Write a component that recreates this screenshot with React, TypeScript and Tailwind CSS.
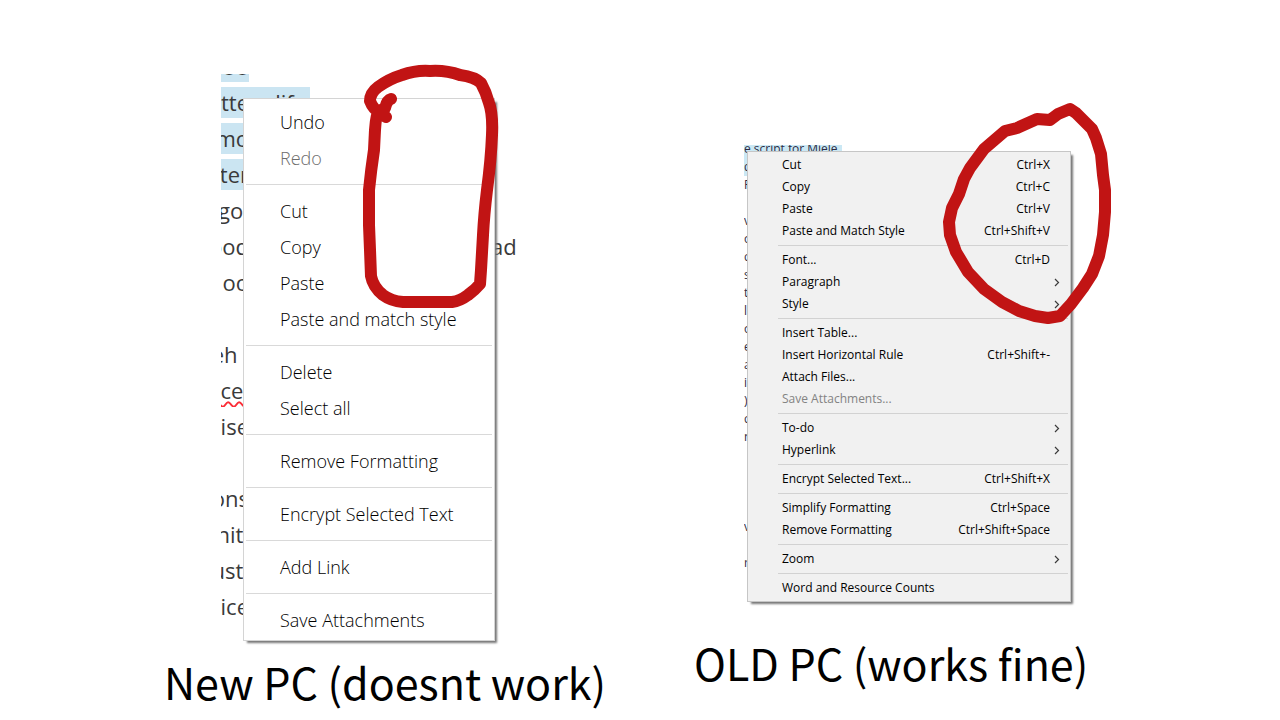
import type { ReactNode } from 'react'
import { clsx } from 'clsx'

interface MenuEntry {
  label: string
  shortcut?: string
  submenu?: boolean
  disabled?: boolean
}

interface DocumentLine {
  text: string
  rest?: string
  after?: string
  selected?: boolean
  misspelled?: boolean
}

const NEW_PC_MENU: MenuEntry[][] = [
  [{ label: 'Undo' }, { label: 'Redo', disabled: true }],
  [{ label: 'Cut' }, { label: 'Copy' }, { label: 'Paste' }, { label: 'Paste and match style' }],
  [{ label: 'Delete' }, { label: 'Select all' }],
  [{ label: 'Remove Formatting' }],
  [{ label: 'Encrypt Selected Text' }],
  [{ label: 'Add Link' }],
  [{ label: 'Save Attachments' }],
]

const OLD_PC_MENU: MenuEntry[][] = [
  [
    { label: 'Cut', shortcut: 'Ctrl+X' },
    { label: 'Copy', shortcut: 'Ctrl+C' },
    { label: 'Paste', shortcut: 'Ctrl+V' },
    { label: 'Paste and Match Style', shortcut: 'Ctrl+Shift+V' },
  ],
  [
    { label: 'Font...', shortcut: 'Ctrl+D' },
    { label: 'Paragraph', submenu: true },
    { label: 'Style', submenu: true },
  ],
  [
    { label: 'Insert Table...' },
    { label: 'Insert Horizontal Rule', shortcut: 'Ctrl+Shift+-' },
    { label: 'Attach Files...' },
    { label: 'Save Attachments...', disabled: true },
  ],
  [
    { label: 'To-do', submenu: true },
    { label: 'Hyperlink', submenu: true },
  ],
  [{ label: 'Encrypt Selected Text...', shortcut: 'Ctrl+Shift+X' }],
  [
    { label: 'Simplify Formatting', shortcut: 'Ctrl+Space' },
    { label: 'Remove Formatting', shortcut: 'Ctrl+Shift+Space' },
  ],
  [{ label: 'Zoom', submenu: true }],
  [{ label: 'Word and Resource Counts' }],
]

const NEW_PC_LINES: DocumentLine[] = [
  { text: 'oo', selected: true },
  { text: 'tte', rest: 'r   life', selected: true },
  { text: 'mo', selected: true },
  { text: 'ter', selected: true },
  { text: 'go ' },
  { text: 'ood', after: 'ad' },
  { text: 'oo' },
  { text: '' },
  { text: 'eh  ' },
  { text: 'ce ', misspelled: true },
  { text: 'oise' },
  { text: '' },
  { text: 'ons' },
  { text: 'nit ' },
  { text: 'ust ' },
  { text: 'ice' },
]

const OLD_PC_LINES = [
  'e script for Miele', 'd', 'P', '', 'v', 'o', 'c', 's', 'te', 'l', 'o', 'e',
  'a', 'i', ')', 'c', 'n', '', '', '', '', 'v', '', 'r',
]

function Chevron() {
  return (
    <svg className="h-[9px] w-[6px]" viewBox="0 0 6 9" fill="none" stroke="#3c3c3c" strokeWidth="1.2" aria-hidden="true">
      <path d="M1 1 L4.5 4.5 L1 8" />
    </svg>
  )
}

function NewMenu() {
  return (
    <div
      role="menu"
      aria-label="New PC"
      className="relative ml-[79px] w-[252px] border border-[#d4d4d4] bg-white pt-[5px] pb-[2px] shadow-[3px_3px_2px_-1px_#777]"
    >
      {NEW_PC_MENU.map((group, i) => (
        <div key={i}>
          {i > 0 && <hr className="mx-[2px] my-2 border-[#d9d9d9]" />}
          {group.map((item) => (
            <button
              key={item.label}
              type="button"
              role="menuitem"
              disabled={item.disabled}
              className="block h-9 w-full pl-9 text-left text-[18px] leading-9 font-light text-black disabled:text-[#6d6d6d]"
            >
              {item.label}
            </button>
          ))}
        </div>
      ))}
    </div>
  )
}

function OldMenu() {
  return (
    <div
      role="menu"
      aria-label="Old PC"
      className="relative ml-[53px] w-[324px] border border-[#c6c6c6] bg-[#f1f1f1] py-[2px] shadow-[3px_3px_2px_-1px_#777]"
    >
      {OLD_PC_MENU.map((group, i) => (
        <div key={i}>
          {i > 0 && <hr className="my-[3px] mr-[2px] ml-[30px] border-[#d2d2d2]" />}
          {group.map((item) => (
            <button
              key={item.label}
              type="button"
              role="menuitem"
              disabled={item.disabled}
              className={clsx(
                'flex h-[22px] w-full items-center justify-between pl-[34px] text-[12px] leading-[22px] text-black disabled:text-[#838383]',
                item.submenu ? 'pr-[10px]' : 'pr-5',
              )}
            >
              <span>{item.label}</span>
              {item.shortcut && <kbd className="font-['Open_Sans','Noto_Sans',sans-serif]">{item.shortcut}</kbd>}
              {item.submenu && <Chevron />}
            </button>
          ))}
        </div>
      ))}
    </div>
  )
}

function NewDocument() {
  return (
    <div className="absolute top-0 left-[57px] w-[300px] overflow-hidden">
      <div className="-mt-[26px] text-[22px] text-[#3a3a3a]">
        {NEW_PC_LINES.map((line, i) => (
          <div key={i} className="flex h-9 items-center whitespace-pre">
            <div className={clsx('flex h-[31px] items-center', line.selected && 'bg-[#cbe5f2]')}>
              <span className="flex w-7 justify-end overflow-hidden">
                <span
                  className={clsx(
                    line.misspelled && 'underline decoration-red-500 decoration-wavy decoration-2 underline-offset-2',
                  )}
                >
                  {line.text}
                </span>
              </span>
              {line.rest && <span className="w-[61px]">{line.rest}</span>}
            </div>
            {line.after && <span className="ml-[242px]">{line.after}</span>}
          </div>
        ))}
      </div>
    </div>
  )
}

function OldDocument() {
  return (
    <div className="absolute top-0 left-[50px] overflow-hidden">
      <div className="-mt-[5px] text-[12px] leading-[18px] text-[#2c2c44]">
        {OLD_PC_LINES.map((line, i) => (
          <div key={i} className="h-[18px]">
            <span className={clsx('inline-block', i < 2 && 'bg-[#cbe8f4] pr-1')}>{line}</span>
          </div>
        ))}
      </div>
    </div>
  )
}

function Marker({ className, viewBox, children }: { className: string; viewBox: string; children: ReactNode }) {
  return (
    <svg
      className={clsx('pointer-events-none absolute', className)}
      viewBox={viewBox}
      fill="none"
      stroke="#c11414"
      strokeWidth="12"
      strokeLinecap="round"
      strokeLinejoin="round"
      aria-hidden="true"
    >
      {children}
    </svg>
  )
}

function Caption({ children }: { children: ReactNode }) {
  return (
    <figcaption className="text-center font-['Noto_Sans_CJK_SC',sans-serif] text-[43px] leading-[60px] whitespace-nowrap text-black">
      {children}
    </figcaption>
  )
}

export default function App() {
  return (
    <main className="flex min-h-screen items-start gap-[92px] overflow-hidden bg-white pl-[164px] font-['Open_Sans','Noto_Sans',sans-serif]">
      <figure className="flex w-[438px] shrink-0 flex-col gap-2.5 pt-[74px]">
        <div className="relative pt-6">
          <NewDocument />
          <NewMenu />
          <Marker className="-top-3.5 left-[196px] h-[252px] w-[144px]" viewBox="360 60 144 252">
            <path d="M386 117 L380 113 Q373 109 370 101 Q370 93 378 87 Q389 79 402 75 Q416 70 430 71 Q446 70 460 75 Q475 77 481 83 Q486 92 489 103 Q493 114 492 135 Q491 160 487 190 Q484 215 483 235 L481 270 L480 284 Q475 290 468 295 Q460 301 452 302 L403 302 Q391 301 383 295 Q373 287 371 276 L370 250 L369 225 L369 190 Q371 170 374 150 L375 130 Q376 114 379 111 L385 108 Q387 100 391 99" />
          </Marker>
        </div>
        <Caption>New PC (doesnt work)</Caption>
      </figure>

      <figure className="flex w-[392px] shrink-0 flex-col gap-[30px] pt-[145px]">
        <div className="relative pt-1.5">
          <OldDocument />
          <OldMenu />
          <Marker className="-top-[45px] left-[246px] h-[230px] w-[180px]" viewBox="940 100 180 230">
            <path d="M1070 109 L1076 113 L1084 121 L1092 129 L1096 138 L1101 154 L1103 175 L1105 190 L1105 212 L1103 235 L1099 256 L1092 274 L1083 288 L1071 304 L1060 316 L1048 318 L1035 316 L1019 311 L1002 302 L984 289 L968 272 L956 252 L950 235 L949 222 L952 208 L959 194 L964 179 L970 168 L984 149 L1005 131 L1017 128 L1037 119 L1050 120 L1058 114 Z" />
          </Marker>
        </div>
        <Caption>OLD PC (works fine)</Caption>
      </figure>
    </main>
  )
}
